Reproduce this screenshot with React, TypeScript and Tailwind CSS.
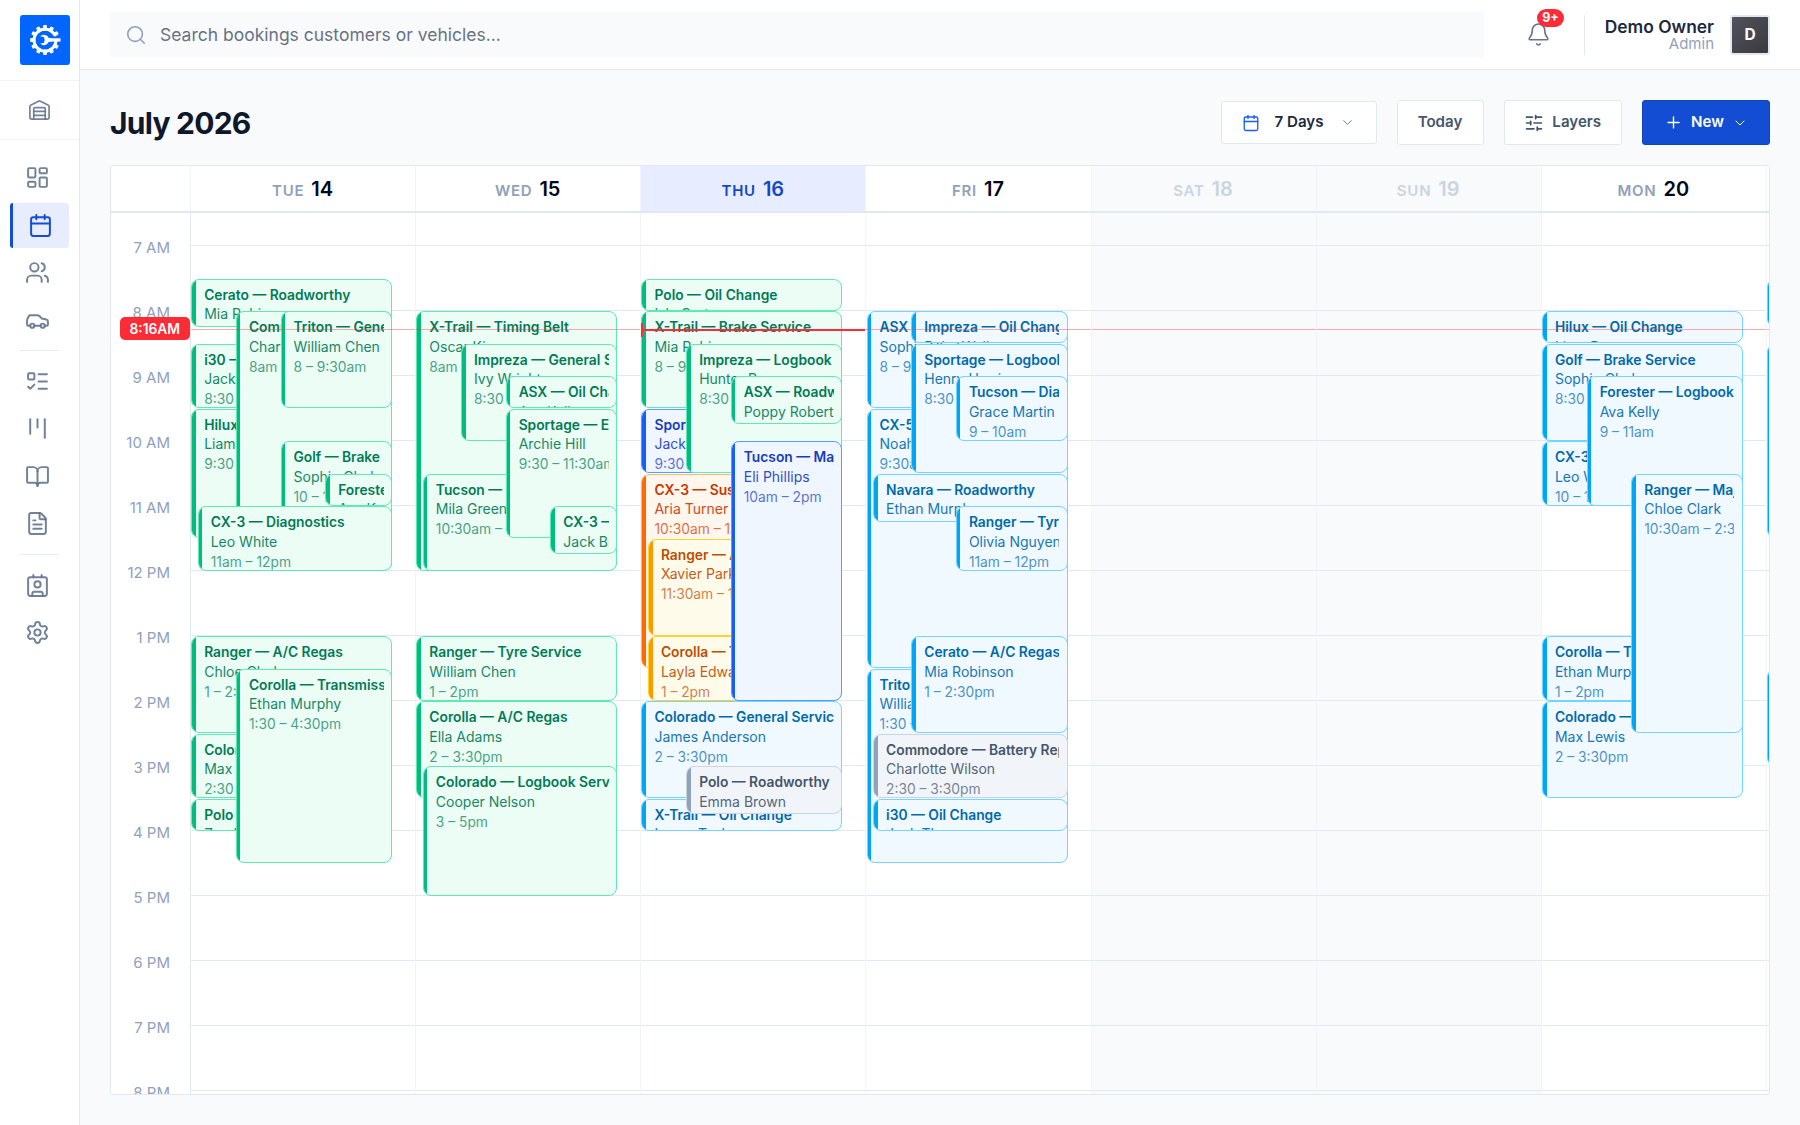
import React from "react";
import {
  Bell,
  BookOpen,
  Calendar,
  Car,
  ChevronDown,
  Contact,
  FileText,
  Kanban,
  LayoutDashboard,
  ListTodo,
  Plus,
  Search,
  Settings,
  SlidersHorizontal,
  Users,
  Warehouse,
} from "lucide-react";

const HOUR = 65;
const FIRST_HOUR = 6.5;

type Tone = "green" | "sky" | "blue" | "orange" | "amber" | "slate";

const tones: Record<Tone, { box: string; bar: string }> = {
  green: { box: "bg-emerald-50 border-emerald-300 text-emerald-700", bar: "bg-emerald-500" },
  sky: { box: "bg-sky-50 border-sky-300 text-sky-700", bar: "bg-sky-500" },
  blue: { box: "bg-blue-50 border-blue-400 text-blue-800", bar: "bg-blue-600" },
  orange: { box: "bg-orange-50 border-orange-300 text-orange-700", bar: "bg-orange-500" },
  amber: { box: "bg-amber-50 border-amber-300 text-amber-700", bar: "bg-amber-500" },
  slate: { box: "bg-slate-100 border-slate-300 text-slate-600", bar: "bg-slate-400" },
};

type Booking = [left: number, start: number, end: number, title: string, name: string, time: string, tone?: Tone];

const A = 0;
const B = 6.5;
const C = 44.7;
const D = 89.3;
const E = 134;

type Day = { dow: string; num: number; tone: Tone; today?: boolean; weekend?: boolean; bookings: Booking[] };

const days: Day[] = [
  {
    dow: "TUE",
    num: 14,
    tone: "green",
    bookings: [
      [A, 7.5, 8.25, "Cerato — Roadworthy", "Mia Robinson", "7:30 – 8:15am"],
      [A, 8.5, 9.5, "i30 — Brake Service", "Jack Thomas", "8:30 – 9:30am"],
      [A, 9.5, 11.5, "Hilux — Timing Belt", "Liam Bennett", "9:30 – 11:30am"],
      [C, 8, 12, "Commodore — Major Service", "Charlotte Wilson", "8am – 12pm"],
      [D, 8, 9.5, "Triton — General Service", "William Chen", "8 – 9:30am"],
      [D, 10, 11.5, "Golf — Brake Service", "Sophie Clarke", "10 – 11:30am"],
      [E, 10.5, 11, "Forester — Oil Change", "Ava Kelly", "10:30 – 11am"],
      [B, 11, 12, "CX-3 — Diagnostics", "Leo White", "11am – 12pm"],
      [A, 13, 14.5, "Ranger — A/C Regas", "Chloe Clark", "1 – 2:30pm"],
      [A, 14.5, 15.5, "Colorado — Tyre Service", "Max Lewis", "2:30 – 3:30pm"],
      [A, 15.5, 16, "Polo — Oil Change", "Zoe Harris", "3:30 – 4pm"],
      [C, 13.5, 16.5, "Corolla — Transmission", "Ethan Murphy", "1:30 – 4:30pm"],
    ],
  },
  {
    dow: "WED",
    num: 15,
    tone: "green",
    bookings: [
      [A, 8, 12, "X-Trail — Timing Belt", "Oscar King", "8am – 12pm"],
      [C, 8.5, 10, "Impreza — General Service", "Ivy Wright", "8:30 – 10am"],
      [B, 10.5, 12, "Tucson — Brake Service", "Mila Green", "10:30am – 12pm"],
      [D, 9, 9.5, "ASX — Oil Change", "Ava Kelly", "9 – 9:30am"],
      [D, 9.5, 11.5, "Sportage — Exhaust", "Archie Hill", "9:30 – 11:30am"],
      [E, 11, 11.75, "CX-3 — Roadworthy", "Jack Brown", "11 – 11:45am"],
      [A, 13, 14, "Ranger — Tyre Service", "William Chen", "1 – 2pm"],
      [A, 14, 15.5, "Corolla — A/C Regas", "Ella Adams", "2 – 3:30pm"],
      [B, 15, 17, "Colorado — Logbook Service", "Cooper Nelson", "3 – 5pm"],
    ],
  },
  {
    dow: "THU",
    num: 16,
    tone: "green",
    today: true,
    bookings: [
      [A, 7.5, 8, "Polo — Oil Change", "Isla Carter", "7:30 – 8am"],
      [A, 8, 9.5, "X-Trail — Brake Service", "Mia Robinson", "8 – 9:30am"],
      [A, 9.5, 10.5, "Sportage — Diagnostics", "Jack Thomas", "9:30 – 10:30am", "blue"],
      [C, 8.5, 10.5, "Impreza — Logbook Service", "Hunter Ryan", "8:30 – 10:30am"],
      [D, 9, 9.75, "ASX — Roadworthy", "Poppy Roberts", "9 – 9:45am"],
      [A, 10.5, 13.5, "CX-3 — Suspension", "Aria Turner", "10:30am – 1:30pm", "orange"],
      [B, 11.5, 13, "Ranger — A/C Regas", "Xavier Parker", "11:30am – 1pm", "amber"],
      [B, 13, 14, "Corolla — Tyre Service", "Layla Edwards", "1 – 2pm", "amber"],
      [D, 10, 14, "Tucson — Major Service", "Eli Phillips", "10am – 2pm", "blue"],
      [A, 14, 15.5, "Colorado — General Service", "James Anderson", "2 – 3:30pm", "sky"],
      [A, 15.5, 16, "X-Trail — Oil Change", "Lucas Taylor", "3:30 – 4pm", "sky"],
      [C, 15, 15.75, "Polo — Roadworthy", "Emma Brown", "3 – 3:45pm", "slate"],
    ],
  },
  {
    dow: "FRI",
    num: 17,
    tone: "sky",
    bookings: [
      [A, 8, 9.5, "ASX — Brake Service", "Sophie Clarke", "8 – 9:30am"],
      [A, 9.5, 13.5, "CX-5 — Timing Belt", "Noah Smith", "9:30am – 1:30pm"],
      [C, 8, 8.5, "Impreza — Oil Change", "Ruby Walker", "8 – 8:30am"],
      [C, 8.5, 10.5, "Sportage — Logbook Service", "Henry Harris", "8:30 – 10:30am"],
      [D, 9, 10, "Tucson — Diagnostics", "Grace Martin", "9 – 10am"],
      [B, 10.5, 11.25, "Navara — Roadworthy", "Ethan Murphy", "10:30 – 11:15am"],
      [D, 11, 12, "Ranger — Tyre Service", "Olivia Nguyen", "11am – 12pm"],
      [A, 13.5, 16.5, "Triton — Transmission", "William Chen", "1:30 – 4:30pm"],
      [C, 13, 14.5, "Cerato — A/C Regas", "Mia Robinson", "1 – 2:30pm"],
      [B, 14.5, 15.5, "Commodore — Battery Replacement", "Charlotte Wilson", "2:30 – 3:30pm", "slate"],
      [B, 15.5, 16, "i30 — Oil Change", "Jack Thomas", "3:30 – 4pm"],
    ],
  },
  { dow: "SAT", num: 18, tone: "sky", weekend: true, bookings: [] },
  { dow: "SUN", num: 19, tone: "sky", weekend: true, bookings: [] },
  {
    dow: "MON",
    num: 20,
    tone: "sky",
    bookings: [
      [A, 8, 8.5, "Hilux — Oil Change", "Liam Bennett", "8 – 8:30am"],
      [A, 8.5, 10, "Golf — Brake Service", "Sophie Clarke", "8:30 – 10am"],
      [A, 10, 11, "CX-3 — Diagnostics", "Leo White", "10 – 11am"],
      [C, 9, 11, "Forester — Logbook Service", "Ava Kelly", "9 – 11am"],
      [A, 13, 14, "Corolla — Tyre Service", "Ethan Murphy", "1 – 2pm"],
      [A, 14, 15.5, "Colorado — Brake Service", "Max Lewis", "2 – 3:30pm"],
      [D, 10.5, 14.5, "Ranger — Major Service", "Chloe Clark", "10:30am – 2:30pm"],
    ],
  },
  {
    dow: "",
    num: 21,
    tone: "sky",
    bookings: [
      [A, 7.5, 8.25, "", "", ""],
      [A, 8.5, 11.5, "", "", ""],
      [A, 13.5, 15, "", "", ""],
    ],
  },
];

const hours = ["7 AM", "8 AM", "9 AM", "10 AM", "11 AM", "12 PM", "1 PM", "2 PM", "3 PM", "4 PM", "5 PM", "6 PM", "7 PM", "8 PM"];

function BookingCard({ booking, tone }: { booking: Booking; tone: Tone }) {
  const [left, start, end, title, name, time, own] = booking;
  const t = tones[own ?? tone];
  return (
    <div
      className={`absolute overflow-hidden rounded-lg border pt-[7px] pr-[7.5px] pl-3 whitespace-nowrap ${t.box}`}
      style={{
        left: left + 0.2,
        width: 201 - left,
        top: (start - FIRST_HOUR) * HOUR + 0.6,
        height: (end - start) * HOUR - 0.4,
      }}
    >
      <span className={`absolute inset-y-0 left-0 w-[3.6px] ${t.bar}`} />
      <div className="overflow-hidden text-[13.8px] leading-[16px] font-semibold">{title}</div>
      <div className="mt-[1.45px] overflow-hidden text-[14px] leading-[20px] opacity-90">{name}</div>
      <div className="overflow-hidden text-[13.8px] leading-[21px] opacity-70">{time}</div>
    </div>
  );
}

function NavIcon({ icon: Icon }: { icon: React.ElementType }) {
  return (
    <div className="flex h-[45px] w-full items-center pl-[25px] text-slate-500/90">
      <Icon size={25} strokeWidth={1.9} />
    </div>
  );
}

function Sidebar() {
  return (
    <aside className="flex w-20 shrink-0 flex-col border-r border-slate-200 bg-white">
      <div className="h-[81px] border-b border-slate-100 pt-[15px] pl-5">
        <div className="flex size-[50px] items-center justify-center rounded-[3px] bg-[#0066ff]">
          <Logo />
        </div>
      </div>
      <div className="flex h-[59px] items-center border-b border-slate-100 pl-7 text-slate-500/90">
        <Warehouse size={23} strokeWidth={1.75} />
      </div>
      <nav className="flex flex-col gap-[2.5px] pt-[15.2px]">
        <NavIcon icon={LayoutDashboard} />
        <div className="ml-[10px] flex h-[45px] w-[59px] items-center self-start rounded-[3px] border-l-[3px] border-[#124dd4] bg-[#e7edfe] pl-[15px] text-[#124dd4]">
          <Calendar size={25} strokeWidth={1.9} />
        </div>
        <NavIcon icon={Users} />
        <NavIcon icon={Car} />
        <div className="mx-5 my-[5.1px] h-px shrink-0 bg-slate-200/80" />
        <NavIcon icon={ListTodo} />
        <NavIcon icon={Kanban} />
        <NavIcon icon={BookOpen} />
        <NavIcon icon={FileText} />
        <div className="mx-5 my-[5.1px] h-px shrink-0 bg-slate-200/80" />
        <NavIcon icon={Contact} />
        <NavIcon icon={Settings} />
      </nav>
    </aside>
  );
}

function Logo() {
  const teeth = Array.from({ length: 11 }, (_, i) => 30 + i * 30);
  return (
    <svg width="32" height="32" viewBox="0 0 32 32" fill="none">
      {teeth.map((a) => (
        <rect key={a} x="25.5" y="14.1" width="5.4" height="3.8" rx="1" fill="#fff" transform={`rotate(${a} 16 16)`} />
      ))}
      <path d="M25 9.8A11 11 0 1 0 27 16" stroke="#fff" strokeWidth="3" />
      <path d="M18 14.3h13.5v3.3H18z" fill="#fff" />
      <path d="M11.2 12.3a5.2 5.2 0 0 1 8.6 2h3v3.3h-3a5.2 5.2 0 0 1-8.6 2l3.6-.7 1-3-1-3z" fill="#fff" />
    </svg>
  );
}

function TopBar() {
  return (
    <header className="flex h-[70px] shrink-0 items-center border-b border-slate-200 bg-white pr-[30px] pl-[30px]">
      <div className="flex h-[45px] w-[1374px] items-center gap-[13px] bg-slate-50 pl-[15px]">
        <Search size={22} strokeWidth={1.75} className="text-slate-400" />
        <span className="pt-px text-[17.5px] text-gray-500">Search bookings customers or vehicles...</span>
      </div>
      <div className="relative ml-[42px] text-slate-500">
        <Bell size={25} strokeWidth={1.5} />
        <span className="absolute -top-[13.5px] left-[11px] flex h-[18px] w-[27px] items-center justify-center rounded-full bg-[#fb2c36] pt-px text-[12.5px] leading-none font-bold text-white">
          9+
        </span>
      </div>
      <div className="ml-[33px] h-10 w-px bg-slate-200" />
      <div className="ml-auto text-right">
        <div className="text-[17.4px] leading-[19px] font-semibold text-slate-800">Demo Owner</div>
        <div className="text-[15px] leading-[16px] text-slate-400">Admin</div>
      </div>
      <div className="ml-4 flex size-10 items-center justify-center rounded-[3px] border-2 border-slate-200 bg-linear-to-br from-[#52525b] to-[#3a3a40] text-[15.5px] font-bold text-white">
        D
      </div>
    </header>
  );
}

function Toolbar() {
  return (
    <div className="flex h-[95px] shrink-0 items-center justify-between pt-[10px]">
      <h1 className="text-[30px] leading-9 font-bold tracking-tight text-slate-900">July 2026</h1>
      <div className="flex items-center gap-5 text-[15.1px]">
        <button className="flex h-[43px] w-[156px] items-center rounded-[3px] border border-slate-200 bg-white pl-[20px] font-semibold text-slate-800">
          <Calendar size={18} strokeWidth={1.75} className="text-blue-600" />
          <span className="ml-[15px]">7 Days</span>
          <ChevronDown size={15} strokeWidth={1.5} className="ml-4 text-slate-500" />
        </button>
        <button className="flex h-[45px] w-[87px] items-center justify-center rounded-[3px] border border-slate-200 bg-white font-semibold text-slate-600">
          Today
        </button>
        <button className="flex h-[45px] w-[118.5px] items-center justify-center gap-2 rounded-[3px] border border-slate-200 bg-white font-semibold text-slate-600">
          <SlidersHorizontal size={20} strokeWidth={2} />
          Layers
        </button>
        <button className="flex h-[45px] w-[128px] items-center justify-center rounded-[3px] border border-[#1045bf] bg-[#124dd4] font-semibold text-white">
          <Plus size={19} strokeWidth={1.75} />
          <span className="mr-2 ml-2">New</span>
          <ChevronDown size={16} strokeWidth={1.5} />
        </button>
      </div>
    </div>
  );
}

function DayHeader({ day }: { day: Day }) {
  const bg = day.today ? "bg-[#e7edfe]" : day.weekend ? "bg-slate-50" : "bg-white";
  const dow = day.today ? "text-[#1447c8]" : day.weekend ? "text-slate-300" : "text-slate-400";
  const num = day.today ? "text-[#1447c8]" : day.weekend ? "text-slate-300" : "text-slate-950";
  return (
    <div className={`flex h-full w-[225.14px] shrink-0 items-center justify-center gap-[7px] border-r border-slate-100 pr-px ${bg}`}>
      {day.dow && (
        <>
          <span className={`pt-[5px] text-[15px] leading-5 font-semibold tracking-[0.05em] ${dow}`}>{day.dow}</span>
          <span className={`text-[20px] leading-7 font-semibold ${num}`}>{day.num}</span>
        </>
      )}
    </div>
  );
}

function DayColumn({ day }: { day: Day }) {
  return (
    <div className={`relative w-[225.14px] shrink-0 border-r border-slate-100 ${day.weekend ? "bg-slate-50" : "bg-white"}`}>
      <div className="flex flex-col pt-[32px]">
        {hours.map((h) => (
          <div key={h} className="h-[65px] border-t border-slate-200" />
        ))}
      </div>
      {day.bookings.map((b, i) => (
        <BookingCard key={i} booking={b} tone={day.tone} />
      ))}
      {day.today ? (
        <div className="absolute inset-x-0 top-[110px] flex h-[14px] items-center">
          <div className="h-full w-[2px] bg-[#fb2c36]" />
          <div className="h-[2px] flex-1 bg-[#fb2c36]" />
        </div>
      ) : (
        <div className="absolute inset-x-0 top-[116px] h-px bg-[#fb2c36]/40" />
      )}
    </div>
  );
}

function CalendarGrid() {
  return (
    <section className="mb-[30px] flex min-h-0 flex-1 flex-col overflow-hidden rounded-[3px] border border-slate-200 bg-white">
      <div className="flex h-[47px] shrink-0 border-b-2 border-slate-200">
        <div className="w-20 shrink-0 border-r border-slate-100" />
        {days.map((d) => (
          <DayHeader key={d.num} day={d} />
        ))}
      </div>
      <div className="flex min-h-0 flex-1 overflow-hidden">
        <div className="relative w-20 shrink-0 self-stretch border-r border-slate-200">
          <div className="flex flex-col pt-[25px]">
            {hours.map((h) => (
              <div key={h} className="h-[65px] shrink-0 pr-5 text-right text-[15px] leading-5 text-slate-400">
                {h}
              </div>
            ))}
          </div>
          <div className="absolute top-[104px] right-0 flex h-[23px] w-[70.5px] items-center justify-center rounded-[5px] bg-[#fb2c36] pt-px text-[13.8px] font-semibold text-white">
            8:16AM
          </div>
        </div>
        {days.map((d) => (
          <DayColumn key={d.num} day={d} />
        ))}
      </div>
    </section>
  );
}

export default function App() {
  return (
    <div className="flex h-[1125px] w-[1800px] overflow-hidden bg-slate-50 font-['Inter',sans-serif]">
      <Sidebar />
      <main className="flex min-w-0 flex-1 flex-col">
        <TopBar />
        <div className="flex min-h-0 flex-1 flex-col px-[30px]">
          <Toolbar />
          <CalendarGrid />
        </div>
      </main>
    </div>
  );
}
